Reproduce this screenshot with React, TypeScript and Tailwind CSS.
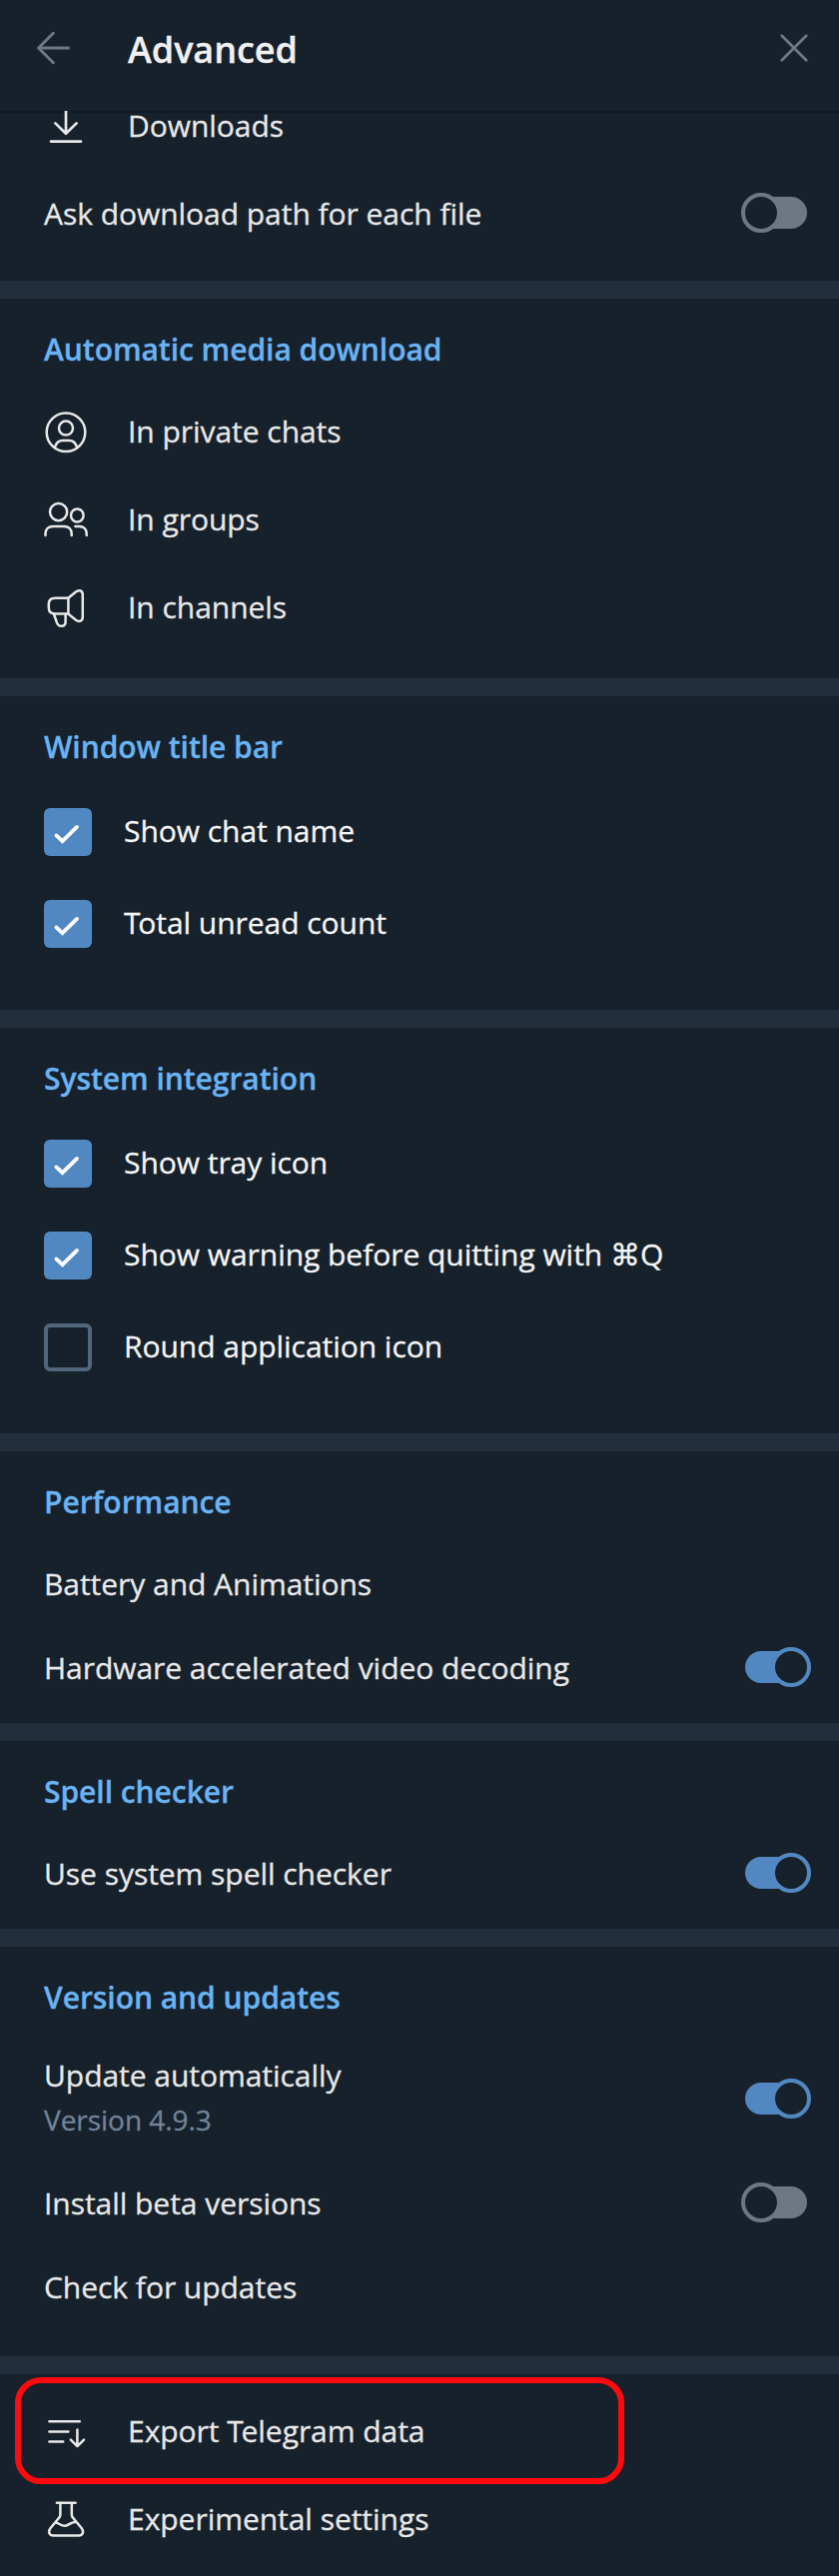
import type { ReactNode } from "react";

function Toggle({ on = false }: { on?: boolean }) {
  return on ? (
    <svg className="mb-[2px] -mr-[4px] shrink-0 text-[#5288c1]" width="66" height="40" viewBox="0 0 66 40">
      <path d="M16 4H46V36H16A16 16 0 0 1 16 4Z" fill="currentColor" />
      <circle cx="46" cy="20" r="18" fill="#17212b" stroke="currentColor" strokeWidth="4" />
    </svg>
  ) : (
    <svg className="mb-[2px] shrink-0 text-[#6d7883]" width="66" height="40" viewBox="0 0 66 40">
      <path d="M20 4H50A16 16 0 0 1 50 36H20Z" fill="currentColor" />
      <circle cx="20" cy="20" r="18" fill="#17212b" stroke="currentColor" strokeWidth="4" />
    </svg>
  );
}

function Icon({ children }: { children: ReactNode }) {
  return (
    <svg
      className="mr-[40px] shrink-0"
      width="44"
      height="44"
      viewBox="0 0 44 44"
      fill="none"
      stroke="currentColor"
      strokeWidth="2.5"
      strokeLinecap="round"
      strokeLinejoin="round"
    >
      {children}
    </svg>
  );
}

function IconRow({ icon, label }: { icon: ReactNode; label: ReactNode }) {
  return (
    <div className="flex h-[88px] items-center px-[44px]">
      <Icon>{icon}</Icon>
      <span>{label}</span>
    </div>
  );
}

function Row({ label, toggle }: { label: string; toggle?: boolean }) {
  return (
    <div className="flex h-[84px] items-center justify-between pr-[32px] pl-[44px]">
      <span>{label}</span>
      {toggle !== undefined && <Toggle on={toggle} />}
    </div>
  );
}

function CheckRow({ label, checked = false }: { label: ReactNode; checked?: boolean }) {
  return (
    <div className="flex h-[92px] items-center pl-[44px]">
      {checked ? (
        <span className="size-[48px] rounded-[6px] bg-[#5288c1]">
          <svg width="48" height="48" viewBox="0 0 48 48" fill="none" stroke="#fff" strokeWidth="3.8" strokeLinecap="round">
            <path d="M12.4 27.4L18.5 33.2L33 18.9" />
          </svg>
        </span>
      ) : (
        <span className="size-[48px] rounded-[6px] border-4 border-[#51667a]" />
      )}
      <span className="mb-[2px] ml-[32px] text-[#f5f5f5]">{label}</span>
    </div>
  );
}

/* Capital T pulled in against the following lowercase letter. */
function TightT() {
  return <span className="tracking-[-2.3px]">T</span>;
}

function Title({ children }: { children: string }) {
  return <h2 className="pt-[31px] pl-[44px] font-semibold text-[#6ab3f3]">{children}</h2>;
}

function Divider() {
  return <div className="h-[18px] bg-[#232e3c]" />;
}

export default function App() {
  return (
    <main className="h-[2579px] w-[840px] overflow-hidden bg-[#17212b] font-['Open_Sans','DejaVu_Sans',sans-serif] text-[30px] leading-[40px] tracking-[-0.04px] text-[#e8e8e8] [-webkit-text-stroke:0.3px]">
      <header className="flex h-[111px] items-start pt-[32px] pr-[31px] pl-[36px]">
        <svg width="36" height="36" viewBox="0 0 36 36" fill="none" stroke="#6d7883" strokeWidth="3" strokeLinecap="round" strokeLinejoin="round">
          <path d="M17.3 1.3L2.6 16L17.3 30.7M2.6 16H32.5" />
        </svg>
        <h1 className="-mt-[2px] ml-[56px] flex-1 text-[36px] font-semibold text-[#f0f0f0]">Advanced</h1>
        <svg width="28" height="32" viewBox="0 0 28 32" fill="none" stroke="#6d7883" strokeWidth="2.8" strokeLinecap="round">
          <path d="M1.8 3.8L26.2 28.2M26.2 3.8L1.8 28.2" />
        </svg>
      </header>
      <div className="h-[2px] bg-[#111a22]" />

      <section>
        <div className="flex h-[57px] items-start pl-[44px]">
          <svg className="-mt-[2px] mr-[40px]" width="44" height="34" viewBox="0 0 44 34" fill="none" stroke="currentColor" strokeWidth="2.7" strokeLinecap="round" strokeLinejoin="round">
            <path d="M22 -2V22.6M11.4 12.4L22 22.8L32.6 12.4M7 30.6H37" />
          </svg>
          <span className="-mt-[7px]">Downloads</span>
        </div>
        <div className="flex h-[111px] items-start justify-between pt-[24px] pr-[32px] pl-[44px]">
          <span>Ask download path for each file</span>
          <span className="-mt-px">
            <Toggle />
          </span>
        </div>
      </section>
      <Divider />

      <section className="pb-[27px]">
        <div className="h-[89px]">
          <Title>Automatic media download</Title>
        </div>
        <IconRow
          label="In private chats"
          icon={
            <>
              <circle cx="22" cy="22.8" r="19.3" />
              <circle cx="22" cy="18.6" r="7" />
              <path d="M11 37.6C12.3 33.2 15 31 19 31H25C29 31 31.7 33.2 33 37.6" />
            </>
          }
        />
        <IconRow
          label="In groups"
          icon={
            <>
              <circle cx="14.6" cy="14.6" r="8.6" />
              <ellipse cx="33.3" cy="18" rx="6.3" ry="6.5" />
              <path d="M1.5 38V36.5C1.5 31.8 4.5 29 9.2 29H20C24.7 29 27.7 31.8 27.7 36.5V38" />
              <path d="M31.4 29H35.2C39.7 29 42.7 31.8 42.7 36.5V38" />
            </>
          }
        />
        <IconRow
          label="In channels"
          icon={
            <>
              <path d="M24.4 12.7H11.4C7 12.7 4.8 15 4.8 18.8V22.6C4.8 26.4 7 28.6 11.4 28.6H24.4Z" />
              <path d="M24.4 12.7L32 6.5C35.2 4 38.8 5.4 38.8 9.4V31.8C38.8 35.6 35.2 37.2 32 34.8L24.4 28.6" />
              <path d="M10 29L12.8 37C14.4 42.4 21.6 42 21.6 36.4V29" />
            </>
          }
        />
      </section>
      <Divider />

      <section className="pb-[40px]">
        <div className="h-[90px]">
          <Title>Window title bar</Title>
        </div>
        <CheckRow label="Show chat name" checked />
        <CheckRow label={<><TightT />otal unread count</>} checked />
      </section>
      <Divider />

      <section className="pb-[40px]">
        <div className="h-[90px]">
          <Title>System integration</Title>
        </div>
        <CheckRow label="Show tray icon" checked />
        <CheckRow label="Show warning before quitting with ⌘Q" checked />
        <CheckRow label="Round application icon" />
      </section>
      <Divider />

      <section className="pb-[13px]">
        <div className="h-[91px]">
          <Title>Performance</Title>
        </div>
        <Row label="Battery and Animations" />
        <Row label="Hardware accelerated video decoding" toggle={true} />
      </section>
      <Divider />

      <section className="pb-[13px]">
        <div className="h-[91px]">
          <Title>Spell checker</Title>
        </div>
        <Row label="Use system spell checker" toggle={true} />
      </section>
      <Divider />

      <section className="pb-[27px]">
        <div className="h-[91px]">
          <Title>Version and updates</Title>
        </div>
        <div className="flex h-[124px] items-center justify-between pr-[32px] pl-[44px]">
          <div className="mb-[4px] flex flex-col gap-[4px]">
            <span>Update automatically</span>
            <span className="text-[28px] text-[#708499]">Version 4.9.3</span>
          </div>
          <Toggle on />
        </div>
        <Row label="Install beta versions" toggle={false} />
        <Row label="Check for updates" />
      </section>
      <Divider />

      <section className="relative pt-[13px]">
        <IconRow
          label={<>Export <TightT />elegram data</>}
          icon={<path d="M5.4 12.3H35.8M5.4 22.5H24.4M5.4 32.4H19.2M33.4 20.4V37M26.8 30.6L33.4 37.2L40 30.6" />}
        />
        <IconRow
          label="Experimental settings"
          icon={
            <>
              <path d="M12.8 5.8H31.6" />
              <path d="M16.4 6V17.5C16.4 18.9 16 19.7 15.1 20.8L6.6 31C3.6 35 5.6 38.5 9.4 38.5H34.8C38.6 38.5 40.6 35 37.6 31L29.1 20.8C28.2 19.7 27.8 18.9 27.8 17.5V6" />
              <path d="M12 25.8C15.5 26 16.6 28.8 20.5 28.8C24.6 28.8 26 25.2 31.2 25" />
            </>
          }
        />
        <div className="absolute top-[3px] left-[15px] h-[107px] w-[610px] rounded-[26px] border-6 border-[#ff0a0f]" />
      </section>
    </main>
  );
}
